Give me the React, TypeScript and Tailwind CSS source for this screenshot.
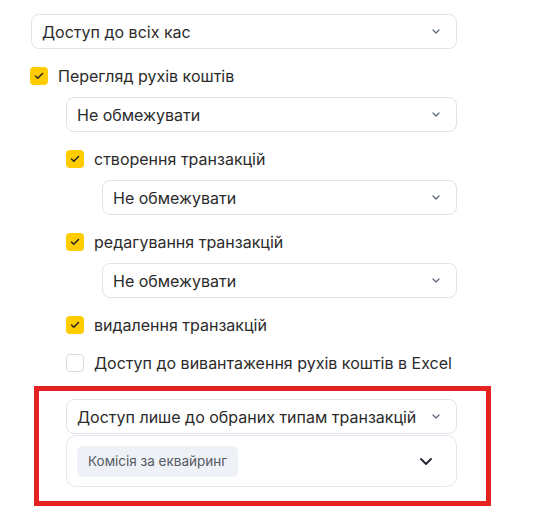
import React from "react";

const SmallChevron = () => (
  <svg width="8" height="5" viewBox="0 0 8 5" fill="none" className="shrink-0">
    <path d="M1 1l3 3 3-3" stroke="#5a6478" strokeWidth="1.2" strokeLinecap="round" strokeLinejoin="round" />
  </svg>
);

const Select = ({ label, className = "" }: { label: string; className?: string }) => (
  <div
    className={`flex h-[35px] items-center justify-between rounded-[8px] border border-[#e2e2ea] bg-white pl-[10px] pr-[16px] ${className}`}
  >
    <span className="text-[16px] text-[#2b2b2b]">{label}</span>
    <SmallChevron />
  </div>
);

const Check = ({ label, checked, className = "" }: { label: string; checked?: boolean; className?: string }) => (
  <div className={`flex h-[20px] items-center gap-[10px] ${className}`}>
    {checked ? (
      <span className="flex h-[18px] w-[18px] items-center justify-center rounded-[4px] bg-[#ffcc00]">
        <svg width="10" height="8" viewBox="0 0 10 8" fill="none">
          <path d="M1.5 4l2.3 2.3L8.5 1.5" stroke="#2b2b2b" strokeWidth="1.6" strokeLinecap="round" strokeLinejoin="round" />
        </svg>
      </span>
    ) : (
      <span className="h-[18px] w-[18px] rounded-[4px] border border-[#d9dbe3] bg-white" />
    )}
    <span className="text-[16px] text-[#2b2b2b]">{label}</span>
  </div>
);

export default function App() {
  return (
    <div className="min-h-[510px] w-[535px] bg-white pt-[14px] pl-[30px]" style={{ fontFamily: "Inter, 'Noto Sans', sans-serif" }}>
      <div className="flex w-[427px] flex-col">
        <Select label="Доступ до всіх кас" className="ml-[1px]" />
        <Check label="Перегляд рухів коштів" checked className="mt-[17px]" />
        <div className="mt-[11px] ml-[36px] flex flex-col">
          <Select label="Не обмежувати" />
          <Check label="створення транзакцій" checked className="mt-[17px]" />
          <Select label="Не обмежувати" className="mt-[11px] ml-[36px]" />
          <Check label="редагування транзакцій" checked className="mt-[17px]" />
          <Select label="Не обмежувати" className="mt-[11px] ml-[36px]" />
          <Check label="видалення транзакцій" checked className="mt-[17px]" />
          <Check label="Доступ до вивантаження рухів коштів в Excel" className="mt-[18px]" />
        </div>
        <div className="mt-[13px] ml-[4px] w-[457px] border-[5px] border-[#e52222] pt-[8px] pr-[29px] pb-[14px] pl-[27px]">
          <Select label="Доступ лише до обраних типам транзакцій" />
          <div className="mt-[1px] flex h-[52px] items-center justify-between rounded-[10px] border border-[#e3e6ef] bg-white pl-[10px] pr-[24px]">
            <span className="flex h-[31px] items-center rounded-[6px] bg-[#eef1f6] px-[11px] text-[13.5px] text-[#555a63]">
              Комісія за еквайринг
            </span>
            <svg width="12" height="7" viewBox="0 0 12 7" fill="none">
              <path d="M1 1l5 5 5-5" stroke="#1f2430" strokeWidth="1.8" strokeLinecap="round" strokeLinejoin="round" />
            </svg>
          </div>
        </div>
      </div>
    </div>
  );
}
